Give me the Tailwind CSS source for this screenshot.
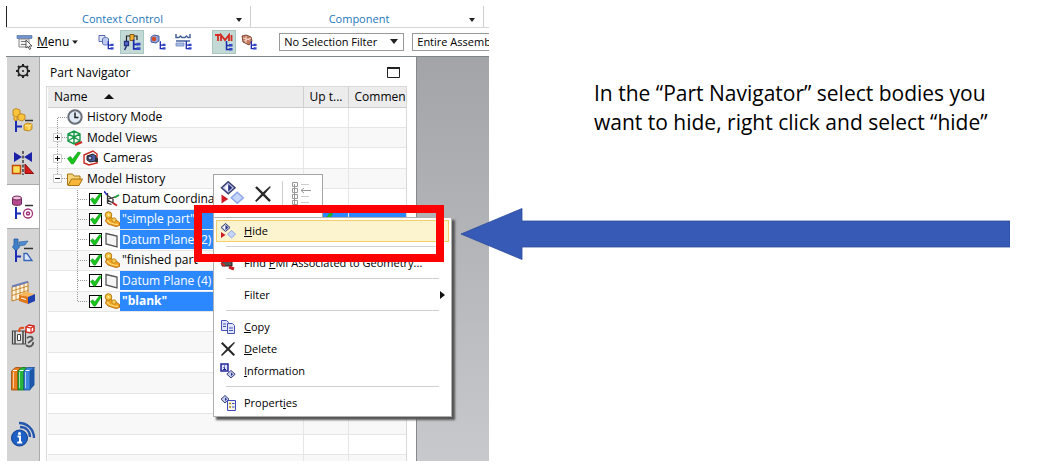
<!DOCTYPE html>
<html lang="en">
<head>
    <meta charset="UTF-8">
    <meta name="viewport" content="width=device-width, initial-scale=1.0">
    <title>Part Navigator</title>
    <script src="https://cdn.jsdelivr.net/npm/@tailwindcss/browser@4"></script>
</head>
<body class="bg-white font-['Open_Sans','Noto_Sans',sans-serif] text-xs text-black">

    <!-- shared icons -->
    <svg class="hidden">
        <symbol id="check" viewBox="0 0 14 14"><path d="M.5 7.500L3.500 5.500l2 2.700L11 1l2.500.7-7 11-2 .3z" fill="#19c41d" stroke="#0c9c14" stroke-width=".7"/></symbol>
        <symbol id="part" viewBox="0 0 16 16">
            <path d="M3 6l4-.5 2 3 3 .5 3.500 2.500v3l-3.500 1-8-2.500L1.500 10z" fill="#f2a324" stroke="#b56a0a" stroke-width=".9"/>
            <circle cx="4.500" cy="4" r="3.300" fill="#f6c544" stroke="#b67a10"/>
            <circle cx="4.500" cy="4" r="1" fill="#fff0a8"/>
            <path d="M3 9l2.500 2.500 4.500 1.500 4 .5" stroke="#ffe17a" stroke-width="1.200" fill="none"/>
            <circle cx="10" cy="9" r="2.200" fill="#f9cf55" stroke="#b67a10" stroke-width=".8"/>
        </symbol>
        <symbol id="plane" viewBox="0 0 16 16"><path d="M2 1.500l11 2.500v11L2 12z" fill="#f5f5f5" stroke="#555" stroke-width="1.300"/></symbol>
        <symbol id="hide" viewBox="0 0 16 16">
            <path d="M5.500.5l4.500 4-4.500 4-4.500-4z" fill="#bcc3ea" stroke="#3a3f70"/>
            <path d="M5.500 2v5l-2.600-2.500z" fill="#fff"/><path d="M5.500 2v5l2.600-2.500z" fill="#26307e"/>
            <path d="M11.500 7.500l4 3.700-4 3.700-4-3.700z" fill="#c5d5fb" stroke="#8ea6ea"/>
            <path d="M1 9v6l4.500-3z" fill="#cf1b26"/>
        </symbol>
        <symbol id="cross" viewBox="0 0 16 16"><path d="M1 2.500L2.500 1 8 6.500 14 1l1 .8L9.500 8l5.500 5.500-1.500 1.500L8 9.500 2 15l-1-1L6.500 8z" fill="#2a2a2a"/></symbol>
        <symbol id="treelet" viewBox="0 0 8 10"><path d="M1.500 0v8.500h4M1.500 4.500h4" stroke="#1c2ab0" stroke-width="1.500" fill="none"/><path d="M4 3h3.500v2.500H4zM4 7h3.500v2.500H4z" fill="#3346c8"/></symbol>
        <symbol id="plus" viewBox="0 0 9 9"><path d="M.5.5h8v8h-8z" fill="#fff" stroke="#ccc"/><path d="M2 4.500h5M4.500 2v5" stroke="#111"/></symbol>
        <symbol id="minus" viewBox="0 0 9 9"><path d="M.5.5h8v8h-8z" fill="#fff" stroke="#ccc"/><path d="M2 4.500h5" stroke="#111"/></symbol>
        <symbol id="caret" viewBox="0 0 8 5"><path d="M0 0h8L4 5z" fill="#222"/></symbol>
    </svg>

    <main class="relative flex min-h-screen px-1.5 pt-1.5 pb-1">

        <!-- application window -->
        <section class="relative flex w-[46%] shrink-0 flex-col overflow-hidden">
            <div class="flex h-[22px] items-stretch border-b border-[#d6d6d6] text-[11px] text-[#2277bb]">
                <div class="w-px bg-[#222]"></div>
                <div class="relative flex w-[244px] items-center justify-center border-r border-[#d0d0d0] pt-1.5 pr-3">
                    Context Control
                    <svg class="absolute right-2 h-1 w-1.5" viewBox="0 0 8 5" preserveAspectRatio="none"><use href="#caret"/></svg>
                </div>
                <div class="relative flex w-[233px] items-center justify-center border-r border-[#d0d0d0] pt-1.5 pr-4">
                    Component
                    <svg class="absolute right-2 h-1 w-1.5" viewBox="0 0 8 5" preserveAspectRatio="none"><use href="#caret"/></svg>
                </div>
            </div>

            <div class="flex h-[29px] items-center border-b border-[#7f868a] pl-2.5">
                <button class="flex items-center gap-[3px]">
                    <svg class="h-4 w-[18px]" viewBox="0 0 18 16">
                        <path d="M1 1.500h15v3H1z" fill="#6f93cf" stroke="#48649a" stroke-width=".6"/>
                        <path d="M3 5h10v8H3z" fill="#f2f2f2" stroke="#888"/><path d="M5 7.500h6M5 10.500h5" stroke="#777"/>
                        <path d="M10 6v8l2-1.500 1.500 3 1.300-.7-1.500-2.800H16z" fill="#fff" stroke="#333" stroke-width=".8"/>
                    </svg>
                    <span class="font-medium"><u>M</u>enu</span>
                    <svg class="h-1 w-1.5" viewBox="0 0 8 5"><use href="#caret"/></svg>
                </button>
                <div class="mx-2 h-5 w-px bg-[#d5d5d5]"></div>
                <div class="flex items-center gap-0.5">
                    <button class="flex h-6 w-6 items-center justify-center" aria-label="Copy to tree">
                        <svg class="h-4 w-4" viewBox="0 0 16 16"><path d="M1 1.500h6v6H1z" fill="#dfe6f8" stroke="#5a6bb0"/><path d="M4.500 5c0-2 6-2 6 0v4.500c0 2-6 2-6 0z" fill="#bccaf0" stroke="#5a6bb0"/><use href="#treelet" x="9" y="7" width="7" height="9"/></svg>
                    </button>
                    <button class="flex h-6 w-6 items-center justify-center border border-[#a8c6c0] bg-[#c3d9d5]" aria-label="Find in tree">
                        <svg class="h-[18px] w-[18px]" viewBox="0 0 18 18"><path d="M7 1.500h4v6H7z" fill="#f0b030" stroke="#8a5a10"/><path d="M7 3H3.500v5M11 3h3v4" fill="none" stroke="#222" stroke-width="1.200"/><path d="M1.500 8.500h4v4h-4z" fill="#5a74d2" stroke="#26307e" stroke-width="1.300"/><path d="M1.500 17l2-4" stroke="#26307e" stroke-width="1.500"/><use href="#treelet" x="9" y="6" width="9" height="12"/></svg>
                    </button>
                    <button class="flex h-6 w-6 items-center justify-center" aria-label="Body in tree">
                        <svg class="h-4 w-4" viewBox="0 0 16 16"><path d="M1 3l3-2 5 1v5L6 9 1 8z" fill="#8fa4dc" stroke="#4c5f9c"/><circle cx="4" cy="5" r="2.200" fill="#d9481f"/><use href="#treelet" x="9" y="7" width="7" height="9"/></svg>
                    </button>
                    <button class="flex h-6 w-6 items-center justify-center" aria-label="Section in tree">
                        <svg class="h-4 w-[18px]" viewBox="0 0 18 16"><path d="M1 0v3.500h3L5.500 2 7 3.500h3L11.500 2 13 3.500h2V0M1 7h14" fill="none" stroke="#46629c" stroke-width="1.500"/><path d="M1 9h8v3H1z" fill="#a8bce4" stroke="#6c86bc" stroke-width=".8"/><use href="#treelet" x="10" y="7" width="7" height="9"/></svg>
                    </button>
                </div>
                <div class="mx-2 h-5 w-px bg-[#d5d5d5]"></div>
                <div class="flex items-center gap-px">
                    <button class="flex h-6 w-6 items-center justify-center border border-[#a8c6c0] bg-[#c3d9d5]" aria-label="PMI in tree">
                        <svg class="h-[18px] w-[18px]" viewBox="0 0 18 18"><path d="M0 2h5M3 2v6M6 8V2l4 5 4-5v6M16.500 2v6" fill="none" stroke="#d42a22" stroke-width="1.800"/><use href="#treelet" x="10" y="8" width="8" height="10"/></svg>
                    </button>
                    <button class="flex h-6 w-6 items-center justify-center" aria-label="Feature in tree">
                        <svg class="h-4 w-4" viewBox="0 0 16 16"><path d="M1 2l4-1 5 2 1 4-3 4-6-3z" fill="#c77b60" stroke="#7d4a3a"/><path d="M2 4l7 2M3 7l7-3M5 2v7" stroke="#f0d8cc"/><use href="#treelet" x="9" y="7" width="7" height="9"/></svg>
                    </button>
                </div>
                <div class="mr-3 ml-1.5 h-5 w-px bg-[#d5d5d5]"></div>
                <div class="relative w-[125px] shrink-0">
                    <select aria-label="Selection filter" class="block h-[18px] w-full appearance-none border border-[#999] bg-white pl-1 text-[11px] leading-4 font-medium">
                        <option>No Selection Filter</option>
                    </select>
                    <svg class="pointer-events-none absolute top-1.5 right-1.5 h-[5px] w-2" viewBox="0 0 8 5"><use href="#caret"/></svg>
                </div>
                <select aria-label="Selection scope" class="ml-2 h-[18px] w-[130px] shrink-0 appearance-none border border-[#999] bg-white pl-1 text-[11px] leading-4 font-medium">
                    <option>Entire Assembly</option>
                </select>
            </div>

            <div class="flex flex-1 items-stretch">
                <!-- resource bar -->
                <nav class="ml-px flex w-[33px] shrink-0 flex-col border-r border-[#aaa] bg-[#d4d4d4]">
                    <button class="mb-3.5 flex h-[27px] items-center justify-center" aria-label="Settings">
                        <svg class="h-4 w-4" viewBox="0 0 16 16" fill="none" stroke="#222"><circle cx="8" cy="8" r="4.800" stroke-width="1.700"/><circle cx="8" cy="8" r="1" fill="#222" stroke="none"/><path d="M8 1v2M8 13v2M1 8h2M13 8h2M3 3l1.500 1.500M11.500 11.500L13 13M13 3l-1.500 1.500M4.500 11.500L3 13" stroke-width="2"/></svg>
                    </button>
                    <button class="flex h-[43px] items-center justify-center" aria-label="Assembly Navigator">
                        <svg class="h-6 w-6" viewBox="0 0 24 24"><path d="M2 2l3-1.500L9 2v5l-3 2-4-1.500z" fill="#f9c33c" stroke="#b67a10" stroke-width=".8"/><path d="M7 7l3-1.500 4 1.500v4l-3 2-4-1.500z" fill="#f9c33c" stroke="#b67a10" stroke-width=".8"/><path d="M3 8.500v3.500l3 1V9" fill="#f9c33c" stroke="#b67a10" stroke-width=".8"/><path d="M14 12.500h8" stroke="#333" stroke-width="1.500"/><path d="M5 13v11M5 18.500h6" stroke="#1b2db5" stroke-width="2"/><path d="M13 17l3-2 5 1v5l-3 2-5-1z" fill="#f9c33c" stroke="#b67a10" stroke-width=".8"/><path d="M14 17.500l4 .7 2.500-1.500M18 18.500V22" stroke="#fff0a8" fill="none"/></svg>
                    </button>
                    <button class="flex h-[43px] items-center justify-center" aria-label="Constraint Navigator">
                        <svg class="h-6 w-6" viewBox="0 0 24 24"><path d="M3 1v10l8-5zM21 1v10l-8-5z" fill="#1c22a8"/><path d="M12 0v24" stroke="#222" stroke-width="1.300" stroke-dasharray="3 1.500"/><path d="M1.500 14.500h8v8h-8z" fill="#fce05a" stroke="#c3480a" stroke-width="1.500"/><path d="M14 13l8.500 9.500H14z" fill="#d81818" stroke="#8e0c0c"/></svg>
                    </button>
                    <button class="flex h-[45px] items-center justify-center border-y border-[#aaa] bg-white" aria-label="Part Navigator">
                        <svg class="h-6 w-6" viewBox="0 0 24 24"><path d="M1.500 3v6c0 1.800 9 1.800 9 0V3z" fill="#b64a8e" stroke="#70265a"/><ellipse cx="6" cy="3" rx="4.500" ry="2" fill="#efc0de" stroke="#70265a"/><path d="M14 10.500h8" stroke="#333" stroke-width="1.500"/><path d="M5 12v12M5 18.500h5" stroke="#1b2db5" stroke-width="2"/><circle cx="17" cy="18.500" r="4.500" fill="#fff" stroke="#a1347c" stroke-width="1.300"/><circle cx="17" cy="18.500" r="1.500" fill="#fff" stroke="#a1347c" stroke-width="1.500"/></svg>
                    </button>
                    <button class="flex h-[42px] items-center justify-center" aria-label="Process Navigator">
                        <svg class="h-6 w-6" viewBox="0 0 24 24"><path d="M3 1h4v6l1.500 2L5 13 1.500 9 3 7z" fill="#3f7fcb" stroke="#245a9c" stroke-width=".8"/><path d="M8 4l9-1-3 4-6 1z" fill="#4f8cd2" stroke="#245a9c" stroke-width=".6"/><path d="M13 10.500h9" stroke="#333" stroke-width="1.500"/><path d="M5 12v12M5 18.500h5" stroke="#1b2db5" stroke-width="2"/><path d="M13 15.500h3l5 7h-8z" fill="#dbe7fa" stroke="#3564b8" stroke-width="1.300"/></svg>
                    </button>
                    <button class="flex h-[43px] items-center justify-center" aria-label="Machining Features">
                        <svg class="h-6 w-6" viewBox="0 0 24 24"><path d="M1 6l16-5v14L1 20z" fill="#fff4dc" stroke="#c27a1e"/><path d="M1 10l16-5M1 14.500l16-5M5 5v13M9 3.500v13.500M13 2.500v13" stroke="#c27a1e" stroke-width=".8"/><path d="M1 5.500l16-4.700" stroke="#6a7cb8" stroke-width="2"/><path d="M8 14l6-3 10 2-7 3z" fill="#f7b659"/><path d="M8 14l9 2v7l-9-3z" fill="#e27719"/><path d="M17 16l7-3v7l-7 3z" fill="#1f3fae"/><path d="M10 17l5 1.500" stroke="#fff"/></svg>
                    </button>
                    <button class="flex h-[43px] items-center justify-center" aria-label="Reuse Library">
                        <svg class="h-6 w-6" viewBox="0 0 24 24"><path d="M1.500 7h13v13h-13z" fill="#ddd" stroke="#444" stroke-width="1.200"/><path d="M4 7v13M12 7v13" stroke="#444" stroke-width="1.500"/><path d="M6.500 10.500h3v6h-3z" fill="#fff" stroke="#444"/><path d="M15 3l3-2 5 1v5l-3 2-5-1z" fill="#fff" stroke="#d4231a" stroke-width="1.500"/><path d="M15 3l5 1 3-2M20 4v4" fill="none" stroke="#d4231a" stroke-width="1.200"/><path d="M8 8c0-4 2-5 5-4" fill="none" stroke="#e4511c" stroke-width="2"/><path d="M16 14c4-3 7 0 5 2l-4 3M15 21c3 3 8 1 7-3" fill="none" stroke="#555" stroke-width="1.800"/></svg>
                    </button>
                    <button class="flex h-[43px] items-center justify-center" aria-label="Library">
                        <svg class="h-6 w-6" viewBox="0 0 24 24"><path d="M.5 4l4-3.500h5L7 4v19H.5z" fill="#e87e1c" stroke="#9a4a08" stroke-width=".8"/><path d="M7 4L10.500.5h5L13 4v19H7z" fill="#27b53b" stroke="#0c6e1c" stroke-width=".8"/><path d="M13 4L16.500.5H23.500L19 4v19h-6z" fill="#3c86e0" stroke="#174c94" stroke-width=".8"/><path d="M19 4l4.500-3.500V18L19 23z" fill="#1b56aa"/><path d="M2.500 5v16M8.500 5v16M14.500 5v16" stroke="#fff" stroke-opacity=".6"/><path d="M2 3.500h4M8.500 3.500h4M14.500 3.500h4" stroke="#fff"/></svg>
                    </button>
                    <button class="mt-3 flex h-[43px] items-center justify-center" aria-label="Information">
                        <svg class="h-[26px] w-[26px]" viewBox="0 0 26 26"><g fill="none" stroke="#2456ad" stroke-width="2.300"><path d="M9 2c8 0 15 6 15 15"/><path d="M10 6c6 0 10 4 10 10"/></g><circle cx="9.500" cy="17" r="8" fill="#1d5fc4" stroke="#123f8c"/><circle cx="9.500" cy="12.500" r="1.500" fill="#fff"/><path d="M7.500 15.500h2.500v6M7.200 21.500h5" stroke="#fff" stroke-width="2" fill="none"/></svg>
                    </button>
                </nav>

                <!-- navigator panel -->
                <div class="flex min-w-0 flex-1 flex-col">
                    <div class="flex h-[29px] items-center justify-between pt-0.5 pr-4 pl-2.5">
                        <h1 class="text-xs">Part Navigator</h1>
                        <svg class="h-[11px] w-[13px]" viewBox="0 0 13 11"><path d="M.5 1h12v9.500H.5z" fill="none" stroke="#222"/><path d="M0 1h13" stroke="#222" stroke-width="2"/></svg>
                    </div>
                    <div class="mr-[9px] ml-1.5 flex-1 overflow-hidden border border-b-0 border-[#d8d8d8] pl-px">
                        <table class="h-full w-full table-fixed border-collapse">
                            <thead>
                                <tr class="h-5 bg-[#ececec] text-left">
                                    <th class="border-r border-b border-[#cfcfcf] p-0 pl-1.5 font-normal">
                                        <div class="flex items-center gap-4">Name <svg class="h-[5px] w-2.5" viewBox="0 0 10 5"><path d="M0 5h10L5 0z" fill="#111"/></svg></div>
                                    </th>
                                    <th class="w-[45px] border-r border-b border-[#cfcfcf] p-0 pl-1.5 font-normal">Up t...</th>
                                    <th class="w-[58px] overflow-hidden border-b border-[#cfcfcf] p-0 pl-1.5 font-normal">Commen</th>
                                </tr>
                            </thead>
                            <tbody id="tree" class="leading-4">
                                <tr class="h-5 border-b border-[#e6e6e6]">
                                    <td class="border-r border-[#e6e6e6] p-0"><div class="flex h-[19px] items-center pl-[9px]"><svg class="h-[19px] w-2.5" viewBox="0 0 10 19"><path d="M.5 10v9M1 9.500h9" stroke="#999" stroke-dasharray="1 1"/></svg>
                                        <svg class="mr-1 h-4 w-4" viewBox="0 0 16 16"><circle cx="8" cy="8" r="6.700" fill="#dfe8f5" stroke="#6a6f78" stroke-width="2"/><path d="M8 3.500V8.500h3.500" fill="none" stroke="#222" stroke-width="1.500"/></svg>History Mode</div></td>
                                    <td class="border-r border-[#e6e6e6] p-0"></td><td class="p-0"></td>
                                </tr>
                                <tr class="h-5 border-b border-[#e6e6e6] bg-[#f8f8f8]">
                                    <td class="border-r border-[#e6e6e6] p-0"><div class="flex h-[19px] items-center pl-[5px]"><svg class="h-[19px] w-3.5" viewBox="0 0 14 19"><path d="M4.500 0v19M9 9.500h5" stroke="#999" stroke-dasharray="1 1"/><use href="#plus" y="5" width="9" height="9"/></svg>
                                        <svg class="mr-1 h-4 w-4" viewBox="0 0 16 16"><path d="M1 4l6-3 6 3v7l-6 3-6-3zM1 4l6 3 6-3M7 1v13M1 11l6-4 6 4" fill="none" stroke="#189a48" stroke-width="1.400"/><path d="M8 15l7-3" stroke="#d62a20" stroke-width="2"/></svg>Model Views</div></td>
                                    <td class="border-r border-[#e6e6e6] p-0"></td><td class="p-0"></td>
                                </tr>
                                <tr class="h-5 border-b border-[#e6e6e6]">
                                    <td class="border-r border-[#e6e6e6] p-0"><div class="flex h-[19px] items-center pl-[5px]"><svg class="h-[19px] w-3.5" viewBox="0 0 14 19"><path d="M4.500 0v19M9 9.500h4" stroke="#999" stroke-dasharray="1 1"/><use href="#plus" y="5" width="9" height="9"/></svg>
                                        <svg class="mr-0.5 h-3.5 w-3.5"><use href="#check"/></svg>
                                        <svg class="mr-1 h-4 w-4" viewBox="0 0 16 16"><path d="M1 5l9-4 4 3v9l-8 2-5-2z" fill="#fff" stroke="#c9271e" stroke-width="1.400"/><path d="M4 6l6-2 3 2v5l-6 1-3-2z" fill="#4a5ba8" stroke="#222"/><circle cx="7" cy="8" r="2" fill="#a9b8ee" stroke="#222"/><path d="M12 8h3v4h-3z" fill="#333"/></svg>Cameras</div></td>
                                    <td class="border-r border-[#e6e6e6] p-0"></td><td class="p-0"></td>
                                </tr>
                                <tr class="h-5 border-b border-[#e6e6e6] bg-[#f8f8f8]">
                                    <td class="border-r border-[#e6e6e6] p-0"><div class="flex h-[19px] items-center pl-[5px]"><svg class="h-[19px] w-3.5" viewBox="0 0 14 19"><path d="M4.500 0v6M9 9.500h5" stroke="#999" stroke-dasharray="1 1"/><use href="#minus" y="5" width="9" height="9"/></svg>
                                        <svg class="mr-1 h-4 w-4" viewBox="0 0 16 16"><path d="M.5 14V3h5L7 5h6v3" fill="#f6d67a" stroke="#a87414"/><path d="M1 14.500L4.500 8h11L12 14.500z" fill="#f5b63a" stroke="#a87414"/></svg>Model History</div></td>
                                    <td class="border-r border-[#e6e6e6] p-0"></td><td class="p-0"></td>
                                </tr>
                            </tbody>
                        </table>
                    </div>
                </div>
                <div class="w-[73px] shrink-0 border-l border-[#85888c] bg-linear-to-b from-[#a2a4a7] to-[#c8c9cd]"></div>
            </div>

            <!-- mini toolbar over the tree -->
            <div class="absolute top-[168px] left-[207px] flex h-12 w-[110px] items-start gap-1.5 border border-[#a5a5a5] bg-white px-1.5 pt-1.5">
                <button aria-label="Hide"><svg class="h-6 w-6"><use href="#hide"/></svg></button>
                <button class="px-1 pt-1" aria-label="Delete"><svg class="h-[18px] w-[18px]"><use href="#cross"/></svg></button>
                <div class="h-8 w-px bg-[#ccc]"></div>
                <button class="pl-0.5" aria-label="Show in tree"><svg class="h-6 w-5" viewBox="0 0 20 24" fill="none" stroke="#999"><path d="M3.500 3v20M1.500 1.500h5v4h-5zM1.500 7.500h5v4h-5zM1.500 13.500h5v4h-5zM1.500 19.500h5v4h-5z" fill="#fff"/><path d="M10 3.500h8M10 15.500h8M10 21.500h8" stroke="#ccc"/><path d="M10 9.500h10M13 7l-3 2.500 3 2.500"/></svg></button>
            </div>

            <!-- context menu -->
            <div class="absolute top-[211px] left-[207px] w-[239px] border border-[#b0b0b0] bg-white p-0.5 text-[11px] font-medium shadow-[3px_3px_2px_#555]">
                <button class="flex h-[22px] w-full items-center gap-2 border border-[#f3cf6b] bg-[#fcf3cf] pl-[3px]"><svg class="h-4 w-4"><use href="#hide"/></svg><span><u>H</u>ide</span></button>
                <hr class="mx-2.5 mt-1 mb-[5px] border-[#d0d0d0]">
                <button class="flex h-[22px] w-full items-center gap-2 pl-1">
                    <svg class="h-4 w-4" viewBox="0 0 16 16"><path d="M2 5h10v6H2z" fill="#555" stroke="#222"/><path d="M1 8l4 3" stroke="#d22" stroke-width="2"/><path d="M9 12l5 2" stroke="#c81c24" stroke-width="3"/></svg>
                    <span class="whitespace-nowrap">Find <u>P</u>MI Associated to Geometry...</span></button>
                <hr class="mx-2.5 mt-1 mb-[5px] border-[#d0d0d0]">
                <button class="flex h-[22px] w-full items-center justify-between pr-1 pl-7"><span>Filter</span><svg class="h-2 w-[5px]" viewBox="0 0 5 8"><path d="M0 0v8l5-4z" fill="#111"/></svg></button>
                <hr class="mx-2.5 mt-1 mb-[5px] border-[#d0d0d0]">
                <button class="flex h-[22px] w-full items-center gap-2 pl-1">
                    <svg class="h-4 w-4" viewBox="0 0 16 16" fill="#e3e7fa" stroke="#4550b8"><path d="M1.500 1.500h5l2 2v8h-7z"/><path d="M7.500 4.500h5l2 2v8h-7z"/><path d="M3 5h3M3 7.500h3M9 9h4M9 11.500h4"/></svg>
                    <span><u>C</u>opy</span></button>
                <button class="flex h-[22px] w-full items-center gap-2 pl-1"><svg class="h-4 w-4"><use href="#cross"/></svg><span><u>D</u>elete</span></button>
                <button class="flex h-[22px] w-full items-center gap-2 pl-1">
                    <svg class="h-4 w-4" viewBox="0 0 16 16"><path d="M1 1h7v7H1z" fill="#dfe3fa" stroke="#20249a" stroke-width="1.500"/><path d="M4.500 2.500v1M3.500 4.500h1v2M3 6.500h3" stroke="#20249a" fill="none"/><path d="M11 7.500l4.200 3.700-4.200 3.700-4.200-3.700z" fill="#c5cdf0" stroke="#3a4078"/><path d="M11 9.500v3.500l2-1.700z" fill="#26307e"/></svg>
                    <span><u>I</u>nformation</span></button>
                <hr class="mx-2.5 mt-1 mb-[5px] border-[#d0d0d0]">
                <button class="flex h-[22px] w-full items-center gap-2 pl-1">
                    <svg class="h-4 w-4" viewBox="0 0 16 16"><path d="M5 .5l4 3.700L5 8 1 4.200z" fill="#c5cdf0" stroke="#3a4078"/><path d="M5 2.500v3.500l2-1.700z" fill="#26307e"/><path d="M7.500 5.500h8v10h-8z" fill="#f6f4e0" stroke="#4048c0"/><path d="M9 8.500h2M9 12h2" stroke="#b08a20" stroke-width="1.500"/><path d="M12 8.500h2.500M12 12h2.500" stroke="#4048c0"/></svg>
                    <span>Propert<u>i</u>es</span></button>
            </div>
            <div class="pointer-events-none absolute top-[199px] left-[188px] h-[57px] w-[250px] border-8 border-[#fe0000]"></div>
        </section>

        <!-- instructions -->
        <section class="relative flex-1 pt-[73px] pl-[105px]">
            <p class="max-w-[410px] text-[21px] leading-[29px]">In the “Part Navigator” select bodies you want to hide, right click and select “hide”</p>
            <svg class="absolute top-[202px] right-[46px] -left-7 h-[52px] w-[calc(100%-18px)]" viewBox="0 0 549 52" preserveAspectRatio="none"><path d="M0 26L61 .5V13h488v26H61v12.500z" fill="#365ab5" stroke="#2c4c9c" stroke-width=".8"/></svg>
        </section>
    </main>

    <script>
        const features = [
            { name: 'Datum Coordina', icon: 'csys' },
            { name: '"simple part"', icon: 'part', selected: true },
            { name: 'Datum Plane (2)', icon: 'plane', selected: true },
            { name: '"finished part"', icon: 'part' },
            { name: 'Datum Plane (4)', icon: 'plane', selected: true },
            { name: '"blank"', icon: 'part', selected: true, bold: true },
        ];
        const icons = {
            csys: '<svg class="h-4 w-4 shrink-0" viewBox="0 0 16 16" fill="none"><path d="M3.500 2v10l4 1.500M3.500 4.500L9 8v4L3.500 9M4 8l7-2" stroke="#333" stroke-width="1.300"/><path d="M0 0l3 4" stroke="#2430c0" stroke-width="1.500"/><path d="M10.500 6.500L15 4" stroke="#18a030" stroke-width="2"/><path d="M9 12l4 2.500" stroke="#d02020" stroke-width="2"/></svg>',
            part: '<svg class="h-4 w-4 shrink-0"><use href="#part"/></svg>',
            plane: '<svg class="h-4 w-4 shrink-0"><use href="#plane"/></svg>',
        };
        const tree = document.getElementById('tree');
        features.forEach((f, i) => {
            const cell = f.selected ? 'bg-[#2b88ff]' : '';
            const text = (f.selected ? 'bg-[#2b88ff] text-white' : '') + (f.bold ? ' font-bold' : '');
            const last = i === features.length - 1;
            tree.innerHTML += `
                <tr class="h-5 border-b border-[#e6e6e6] ${i % 2 ? 'bg-[#f8f8f8]' : ''}">
                    <td class="border-r border-[#e6e6e6] p-0">
                        <label class="flex h-[19px] items-center pl-[29px]">
                            <svg class="mr-0.5 h-[19px] w-2.5 shrink-0" viewBox="0 0 10 19"><path d="${last ? 'M.5 0v10' : 'M.5 0v19'}M1 9.500h9" stroke="#999" stroke-dasharray="1 1"/></svg>
                            <span class="mr-0.5 grid shrink-0 place-items-center">
                                <input type="checkbox" checked class="col-start-1 row-start-1 h-[13px] w-[13px] appearance-none border border-black bg-white">
                                <svg class="pointer-events-none col-start-1 row-start-1 h-3 w-3"><use href="#check"/></svg>
                            </span>
                            ${icons[f.icon]}
                            <span class="flex h-full flex-1 items-center whitespace-nowrap pl-0.5 ${text}">${f.name}</span>
                        </label>
                    </td>
                    <td class="border-r border-[#e6e6e6] p-0 ${cell}">${i === 1 ? '<svg class="mx-auto h-3.5 w-3.5"><use href="#check"/></svg>' : ''}</td>
                    <td class="p-0 ${cell}"></td>
                </tr>`;
        });
        // blank rows down to the bottom edge
        for (let i = 0; i < 8; i++) {
            const shade = i % 2 ? 'bg-[#f8f8f8]' : '';
            tree.innerHTML += `<tr class="${i < 7 ? 'h-5 border-b' : 'h-1.5'} border-[#e6e6e6] ${shade}"><td class="border-r border-[#e6e6e6] p-0"></td><td class="border-r border-[#e6e6e6] p-0"></td><td class="p-0"></td></tr>`;
        }
    </script>
</body>
</html>
